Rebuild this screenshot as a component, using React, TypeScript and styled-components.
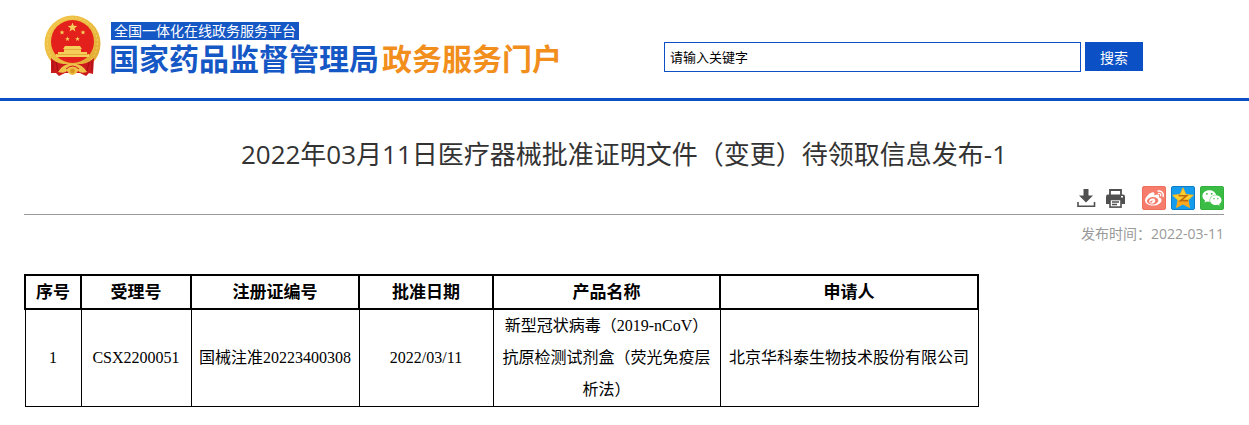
import React from "react";
import styled, { createGlobalStyle } from "styled-components";
import { FaWeibo, FaWeixin } from "react-icons/fa";

const BLUE = "#0b50c4";
const UI_FONT = '"Open Sans", "Noto Sans CJK SC", sans-serif';
const TABLE_FONT = '"Liberation Serif", "Noto Sans CJK SC", serif';

const GlobalStyle = createGlobalStyle`
  *, *::before, *::after { box-sizing: border-box; }
  body { margin: 0; background: #fff; color: #000; font-family: ${UI_FONT}; }
`;

const Header = styled.header`
  display: flex;
  align-items: flex-start;
  justify-content: space-between;
  min-height: 101px;
  padding: 15px 106px 0 44px;
  border-bottom: 3px solid ${BLUE};
`;

const Brand = styled.a`
  display: flex;
  gap: 8px;
  text-decoration: none;
`;

const BrandText = styled.span`
  display: flex;
  flex-direction: column;
  align-items: flex-start;
  padding-top: 7px;
`;

const Platform = styled.span`
  margin-left: 2px;
  padding: 0 3px;
  background: #1557c4;
  color: #fff;
  font-size: 14px;
  line-height: 18px;
  white-space: nowrap;
`;

const SiteName = styled.span`
  color: #1557c4;
  font-size: 30px;
  font-weight: 700;
  line-height: 38px;
  white-space: nowrap;
`;

const Accent = styled.span`
  margin-left: 3px;
  color: #f18e1c;
`;

const SearchForm = styled.form`
  display: flex;
  align-items: flex-start;
  gap: 4px;
  margin-top: 27px;
`;

const SearchInput = styled.input`
  width: 417px;
  height: 30px;
  padding: 0 5px;
  border: 1px solid ${BLUE};
  border-radius: 0;
  background: #fff;
  color: #000;
  font-family: ${UI_FONT};
  font-size: 13px;
  &::placeholder { color: #000; opacity: 1; }
`;

const SearchButton = styled.button`
  width: 58px;
  height: 29px;
  padding: 0;
  border: 0;
  background: ${BLUE};
  color: #fff;
  font-family: ${UI_FONT};
  font-size: 14px;
  cursor: pointer;
`;

const Main = styled.main`
  padding: 32px 25px 16px 24px;
`;

const Title = styled.h1`
  margin: 0;
  color: #333;
  font-size: 26px;
  font-weight: 400;
  line-height: 42px;
  text-align: center;
`;

const Toolbar = styled.div`
  display: flex;
  justify-content: flex-end;
  gap: 17px;
  margin-top: 11px;
  padding-bottom: 4px;
  border-bottom: 1px solid #999;
`;

const ToolGroup = styled.div<{ $gap: number }>`
  display: flex;
  align-items: center;
  gap: ${(p) => p.$gap}px;
`;

const ToolButton = styled.button`
  display: flex;
  padding: 0;
  border: 0;
  background: none;
  cursor: pointer;
`;

const ShareLink = styled.a<{ $color: string; $edge: string }>`
  display: flex;
  align-items: center;
  justify-content: center;
  width: 24px;
  height: 24px;
  border: 1px solid ${(p) => p.$edge};
  border-radius: 2px;
  background: ${(p) => p.$color};
  color: #fff;
`;

const Published = styled.p`
  margin: 9px 0 30px;
  color: #999;
  font-size: 14px;
  line-height: 20px;
  text-align: right;
`;

const Table = styled.table`
  width: 953px;
  table-layout: fixed;
  border-collapse: collapse;
  font-family: ${TABLE_FONT};
  text-align: center;
`;

const Col = styled.col<{ $width: number }>`
  width: ${(p) => p.$width}px;
`;

const HeadCell = styled.th`
  padding: 2px 0 0;
  border: 2px solid #000;
  font-size: 17px;
  font-weight: 700;
  line-height: 30px;
`;

const Cell = styled.td`
  padding: 0 5px;
  border: 1px solid #000;
  font-size: 16px;
  line-height: 32px;
`;

function starPoints(cx: number, cy: number, r: number) {
  return Array.from({ length: 10 }, (_, i) => {
    const a = (Math.PI / 5) * i - Math.PI / 2;
    const d = i % 2 ? r * 0.42 : r;
    return `${(cx + d * Math.cos(a)).toFixed(2)},${(cy + d * Math.sin(a)).toFixed(2)}`;
  }).join(" ");
}

function Emblem() {
  return (
    <svg width="57" height="62" viewBox="0 0 57 62" aria-hidden="true">
      <defs>
        <linearGradient id="gold" x1="0" y1="0" x2="1" y2="1">
          <stop offset="0" stopColor="#f3c64a" />
          <stop offset="0.5" stopColor="#ebbd42" />
          <stop offset="1" stopColor="#dfa42e" />
        </linearGradient>
      </defs>
      <circle cx="28.5" cy="28.5" r="28" fill="url(#gold)" />
      <circle cx="28.5" cy="28" r="25" fill="none" stroke="#f6d468" strokeWidth="1" strokeDasharray="2 2" />
      <circle cx="28.5" cy="26.5" r="21.5" fill="#e3201b" />
      <path d="M7 43 Q12 48 19 49 L38 49 Q45 48 50 43 L49 59 L45 58 L42 61 L36 58 L21 58 L15 61 L12 58 L7 58 Z" fill="#cc191c" />
      <path d="M12 47 L14 56 M45 47 L43 56 M9 46 V56 M48 46 V56" stroke="#9f1015" strokeWidth="1" />
      <g fill="#f6cf5a">
        <polygon points={starPoints(28.5, 12.5, 5)} />
        <polygon points={starPoints(18, 17.5, 2.6)} />
        <polygon points={starPoints(39, 17.5, 2.6)} />
        <polygon points={starPoints(23.5, 24, 2.5)} />
        <polygon points={starPoints(33.5, 24, 2.5)} />
        <path d="M21 31 H36 L38 34 H37 V37 H43 V39 H45 V42 H12 V39 H14 V37 H20 V34 H19 Z" />
      </g>
      <path d="M20 34.5 H37 M13 39.5 H44" stroke="#dfa033" strokeWidth="0.8" />
      <path d="M17 53 Q23 48 28.5 49 Q34 48 40 53 L43 57 Q37 59 34 56 Q28.5 64 23 56 Q20 59 14 57 Z" fill="#efc14a" />
      <path d="M22 54 Q28.5 48 35 54" fill="none" stroke="#cc191c" strokeWidth="1" />
      <circle cx="28.5" cy="56" r="2.4" fill="#d9971f" />
    </svg>
  );
}

function DownloadIcon() {
  return (
    <svg width="19" height="19" viewBox="0 0 19 19" aria-hidden="true">
      <path d="M6.5 0 H11.5 V6.5 H16 L9 13.5 L2 6.5 H6.5 Z" fill="#505050" />
      <path d="M1 13 V17.2 H17.5 V13" fill="none" stroke="#505050" strokeWidth="1.6" />
    </svg>
  );
}

function PrintIcon() {
  return (
    <svg width="19" height="19" viewBox="0 0 19 19" aria-hidden="true">
      <path d="M4 6 V1 H15 V6" fill="none" stroke="#505050" strokeWidth="1.8" />
      <path d="M2 5.5 H17 Q19 5.5 19 7.5 V15 H0 V7.5 Q0 5.5 2 5.5 Z" fill="#505050" />
      <rect x="4" y="10.5" width="11" height="7.6" fill="#fff" stroke="#505050" strokeWidth="1.6" />
      <path d="M6 13 H13 M6 15.5 H11" stroke="#505050" strokeWidth="1.3" />
      <rect x="15" y="7" width="2" height="1.5" fill="#fff" />
    </svg>
  );
}

function QzoneIcon() {
  return (
    <svg width="22" height="22" viewBox="1 1 22 22" aria-hidden="true">
      <path
        d="M12 1.8 L15 8.4 L22.4 9.2 L17 14.2 L18.5 21.5 L12 18 L5.5 21.5 L7 14.2 L1.6 9.2 L9 8.4 Z"
        fill="#ffd02e"
        stroke="#f6b21a"
        strokeWidth="0.8"
        strokeLinejoin="round"
      />
      <path d="M7 14.2 L12 16 L17.4 14.2 L18.5 21.5 L12 18 L5.5 21.5 Z" fill="#fba61c" />
      <path d="M7.5 9.8 H15.5 L9.5 14.6 H17" fill="none" stroke="#c0690c" strokeWidth="1.6" />
    </svg>
  );
}

const columns = [
  { label: "序号", width: 56 },
  { label: "受理号", width: 110 },
  { label: "注册证编号", width: 168 },
  { label: "批准日期", width: 134 },
  { label: "产品名称", width: 227 },
  { label: "申请人", width: 258 },
];

const rows = [
  [
    "1",
    "CSX2200051",
    "国械注准20223400308",
    "2022/03/11",
    "新型冠状病毒（2019-nCoV）抗原检测试剂盒（荧光免疫层析法）",
    "北京华科泰生物技术股份有限公司",
  ],
];

export default function App() {
  return (
    <>
      <GlobalStyle />
      <Header>
        <Brand href="#">
          <Emblem />
          <BrandText>
            <Platform>全国一体化在线政务服务平台</Platform>
            <SiteName>
              国家药品监督管理局<Accent>政务服务门户</Accent>
            </SiteName>
          </BrandText>
        </Brand>
        <SearchForm role="search" onSubmit={(e) => e.preventDefault()}>
          <SearchInput type="text" aria-label="请输入关键字" placeholder="请输入关键字" />
          <SearchButton type="submit">搜索</SearchButton>
        </SearchForm>
      </Header>
      <Main>
        <Title>2022年03月11日医疗器械批准证明文件（变更）待领取信息发布-1</Title>
        <Toolbar>
          <ToolGroup $gap={10}>
            <ToolButton type="button" aria-label="下载">
              <DownloadIcon />
            </ToolButton>
            <ToolButton type="button" aria-label="打印">
              <PrintIcon />
            </ToolButton>
          </ToolGroup>
          <ToolGroup $gap={5}>
            <ShareLink href="#" $color="#f67d6c" $edge="#ef6f5e" aria-label="微博">
              <FaWeibo size={19} />
            </ShareLink>
            <ShareLink href="#" $color="#159ced" $edge="#0c7cc8" aria-label="QQ空间">
              <QzoneIcon />
            </ShareLink>
            <ShareLink href="#" $color="#3bbd45" $edge="#33b13d" aria-label="微信">
              <FaWeixin size={20} />
            </ShareLink>
          </ToolGroup>
        </Toolbar>
        <Published>发布时间：2022-03-11</Published>
        <Table>
          <colgroup>
            {columns.map((c) => (
              <Col key={c.label} $width={c.width} />
            ))}
          </colgroup>
          <thead>
            <tr>
              {columns.map((c) => (
                <HeadCell key={c.label} scope="col">
                  {c.label}
                </HeadCell>
              ))}
            </tr>
          </thead>
          <tbody>
            {rows.map((r) => (
              <tr key={r[0]}>
                {r.map((value, i) => (
                  <Cell key={columns[i].label}>{value}</Cell>
                ))}
              </tr>
            ))}
          </tbody>
        </Table>
      </Main>
    </>
  );
}
